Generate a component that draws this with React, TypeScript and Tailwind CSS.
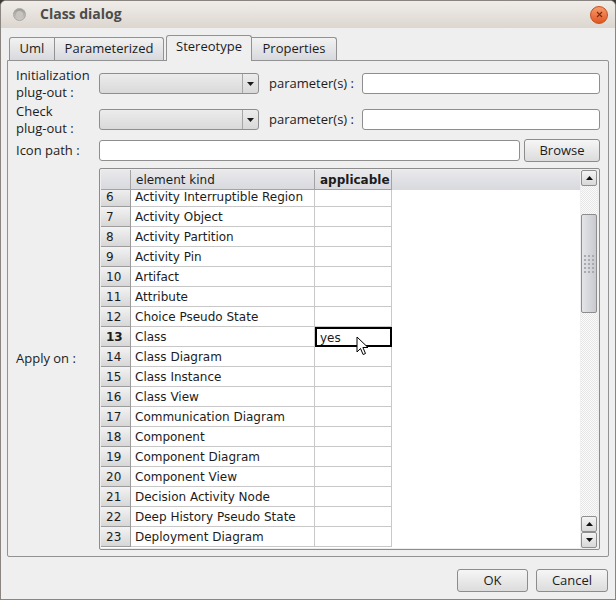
import React from 'react';

const rows: { n: number; kind: string; applicable?: string }[] = [
    { n: 6, kind: 'Activity Interruptible Region' },
    { n: 7, kind: 'Activity Object' },
    { n: 8, kind: 'Activity Partition' },
    { n: 9, kind: 'Activity Pin' },
    { n: 10, kind: 'Artifact' },
    { n: 11, kind: 'Attribute' },
    { n: 12, kind: 'Choice Pseudo State' },
    { n: 13, kind: 'Class', applicable: 'yes' },
    { n: 14, kind: 'Class Diagram' },
    { n: 15, kind: 'Class Instance' },
    { n: 16, kind: 'Class View' },
    { n: 17, kind: 'Communication Diagram' },
    { n: 18, kind: 'Component' },
    { n: 19, kind: 'Component Diagram' },
    { n: 20, kind: 'Component View' },
    { n: 21, kind: 'Decision Activity Node' },
    { n: 22, kind: 'Deep History Pseudo State' },
    { n: 23, kind: 'Deployment Diagram' },
];

const font = "font-['Open_Sans','DejaVu_Sans',sans-serif]";
const cellFont = "font-['DejaVu_Sans','Open_Sans',sans-serif]";

const Combo: React.FC = () => (
    <div className="w-[160px] h-[21px] flex rounded-[3px] border border-[#8e8e8e] bg-gradient-to-b from-[#ececec] to-[#d9d9d9]">
        <div className="flex-1" />
        <div className="w-[16px] flex items-center justify-center border-l border-[#a6a6a6]">
            <svg width="7" height="4" viewBox="0 0 7 4"><path d="M0 0h7L3.5 4z" fill="#1a1a1a" /></svg>
        </div>
    </div>
);

const TextInput: React.FC<{ className?: string }> = ({ className = '' }) => (
    <div className={`h-[21px] rounded-[3px] border border-[#8e8e8e] bg-white ${className}`} />
);

const Button: React.FC<{ label: string; className?: string }> = ({ label, className = '' }) => (
    <div className={`h-[23px] rounded-[3px] border border-[#8c8c8c] bg-gradient-to-b from-[#f6f6f6] to-[#dcdcdc] flex items-center justify-center text-[13px] text-[#1c1c1c] ${className}`}>
        {label}
    </div>
);

const ScrollArrow: React.FC<{ up: boolean }> = ({ up }) => (
    <div className="h-[16px] rounded-[2px] border border-[#8f8f8f] bg-gradient-to-b from-[#f4f4f4] to-[#d8d8d8] flex items-center justify-center">
        <svg width="7" height="4" viewBox="0 0 7 4">
            <path d={up ? 'M0 4h7L3.5 0z' : 'M0 0h7L3.5 4z'} fill="#111" />
        </svg>
    </div>
);

const Scrollbar: React.FC = () => (
    <div className="w-[16px] flex flex-col bg-[repeating-conic-gradient(#e6e6e6_0%_25%,#fbfbfb_0%_50%)] bg-[length:2px_2px]">
        <ScrollArrow up />
        <div className="h-[28px]" />
        <div className="h-[99px] rounded-[2px] border border-[#8c8c8c] bg-gradient-to-r from-[#e4e5e9] to-[#c9cacf] flex items-center justify-center">
            <div className="grid grid-cols-3 gap-[2px]">
                {Array.from({ length: 15 }).map((_, i) => (
                    <div key={i} className="w-[2px] h-[2px] bg-[#a9aab0]" />
                ))}
            </div>
        </div>
        <div className="flex-1" />
        <ScrollArrow up />
        <ScrollArrow up={false} />
    </div>
);

const Cursor: React.FC = () => (
    <svg className="absolute left-[356px] top-[336px]" width="13" height="20" viewBox="0 0 13 20">
        <path d="M1 1v15l3.5-3.5 2.6 6 2.4-1-2.6-6H12z" fill="#fff" stroke="#000" strokeWidth="1" strokeLinejoin="round" />
    </svg>
);

export default function App() {
    return (
        <div className={`relative w-[616px] h-[600px] bg-[#3c3b37] ${font}`}>
            <div className="absolute inset-0 rounded-t-[6px] overflow-hidden bg-[#efefef] border border-[#8a8580] flex flex-col">
                {/* title bar */}
                <div className="h-[27px] shrink-0 bg-gradient-to-b from-[#f0ede9] to-[#dcd6cf] flex items-center">
                    <div className="ml-[12px] w-[13px] h-[13px] rounded-full bg-gradient-to-b from-[#9c9a97] to-[#cfccc8] border border-[#a8a5a1] flex items-center justify-center">
                        <div className="w-[7px] h-[7px] rounded-full bg-[#c7c4bf]" />
                    </div>
                    <span className="ml-[14px] text-[14px] font-bold text-[#4c4c4c] leading-[18px] pb-[1px]">Class dialog</span>
                    <div className="ml-auto mr-[7px] w-[18px] h-[18px] rounded-full bg-gradient-to-b from-[#f79a6c] to-[#e0541c] border border-[#c2501e] flex items-center justify-center">
                        <svg width="7" height="7" viewBox="0 0 7 7"><path d="M1 1l5 5M6 1L1 6" stroke="#7a2b0a" strokeWidth="1.1" /></svg>
                    </div>
                </div>

                {/* tabs */}
                <div className="h-[32px] shrink-0 flex items-end pl-[8px] text-[13px] text-[#1c1c1c]">
                    <div className="h-[23px] w-[46px] border border-[#929292] border-b-0 rounded-tl-[3px] bg-gradient-to-b from-[#f2f2f2] to-[#d8d9dd] flex items-center justify-center">Uml</div>
                    <div className="h-[23px] w-[109px] border border-l-0 border-[#929292] border-b-0 rounded-tr-[3px] bg-gradient-to-b from-[#f2f2f2] to-[#d8d9dd] flex items-center justify-center">Parameterized</div>
                    <div className="h-[26px] w-[86px] ml-[2px] mb-[-1px] relative z-10 border border-[#929292] border-b-0 rounded-t-[3px] bg-[#efefef] flex items-center justify-center pb-[3px]">Stereotype</div>
                    <div className="h-[23px] w-[85px] border border-l-0 border-[#929292] border-b-0 rounded-tr-[3px] bg-gradient-to-b from-[#f2f2f2] to-[#d8d9dd] flex items-center justify-center">Properties</div>
                </div>

                {/* pane */}
                <div className="mx-[6px] h-[497px] shrink-0 border border-[#929292] rounded-b-[2px] rounded-tr-[2px] flex flex-col pt-[6px] pl-[8px] pr-[8px] pb-[6px] text-[13px] text-[#1c1c1c]">
                    <div className="h-[33px] flex items-center">
                        <div className="w-[83px] leading-[17px]">Initialization<br />plug-out :</div>
                        <Combo />
                        <span className="ml-[10px] w-[93px]">parameter(s) :</span>
                        <TextInput className="flex-1" />
                    </div>
                    <div className="h-[33px] mt-[3px] flex items-center">
                        <div className="w-[83px] leading-[17px]">Check<br />plug-out :</div>
                        <Combo />
                        <span className="ml-[10px] w-[93px]">parameter(s) :</span>
                        <TextInput className="flex-1" />
                    </div>
                    <div className="h-[23px] mt-[3px] flex items-center">
                        <div className="w-[83px]">Icon path :</div>
                        <TextInput className="flex-1" />
                        <Button label="Browse" className="ml-[4px] w-[76px]" />
                    </div>
                    <div className="mt-[6px] flex-1 flex items-center">
                        <div className="w-[83px]">Apply on :</div>
                        <div className="flex-1 h-full border border-[#8c8c8c] rounded-[2px] p-[1px] flex bg-[#efefef]">
                            <div className="flex-1 flex flex-col">
                                <div className={`h-[20px] flex bg-gradient-to-b from-[#e9e9ec] to-[#d8d9de] text-[12px] ${cellFont}`}>
                                    <div className="w-[30px] border-r border-b border-[#a3a3a3]" />
                                    <div className="w-[184px] border-r border-b border-[#a3a3a3] pl-[5px] pt-[2px] leading-[17px]">element kind</div>
                                    <div className="w-[77px] border-r border-b border-[#a3a3a3] pl-[5px] pt-[2px] leading-[17px] font-bold">applicable</div>
                                    <div className="flex-1" />
                                </div>
                                <div className="flex-1 overflow-hidden bg-white">
                                    <div className={`mt-[-3px] text-[12px] ${cellFont}`}>
                                        {rows.map(r => (
                                            <div key={r.n} className="h-[20px] flex">
                                                <div className={`w-[30px] border-r border-b border-[#9d9d9d] bg-gradient-to-b from-[#f3f3f3] to-[#d7d7d7] pl-[5px] pt-[2px] leading-[17px] ${r.n === 13 ? 'font-bold' : ''}`}>{r.n}</div>
                                                <div className="w-[184px] border-r border-b border-[#c8c8c8] pl-[4px] pt-[2px] leading-[17px] whitespace-nowrap overflow-hidden">{r.kind}</div>
                                                {r.applicable ? (
                                                    <div className="w-[77px] border-2 border-black pl-[3px] pt-[1px] leading-[16px]">{r.applicable}</div>
                                                ) : (
                                                    <div className="w-[77px] border-r border-b border-[#c8c8c8]" />
                                                )}
                                                <div className="flex-1" />
                                            </div>
                                        ))}
                                    </div>
                                </div>
                            </div>
                            <div className="ml-[1px] mr-[1px] flex">
                                <Scrollbar />
                            </div>
                        </div>
                    </div>
                </div>

                {/* buttons */}
                <div className="flex-1 flex items-start justify-end pr-[7px] gap-[8px] pt-[12px]">
                    <Button label="OK" className="w-[71px]" />
                    <Button label="Cancel" className="w-[72px]" />
                </div>
            </div>
            <Cursor />
        </div>
    );
}
